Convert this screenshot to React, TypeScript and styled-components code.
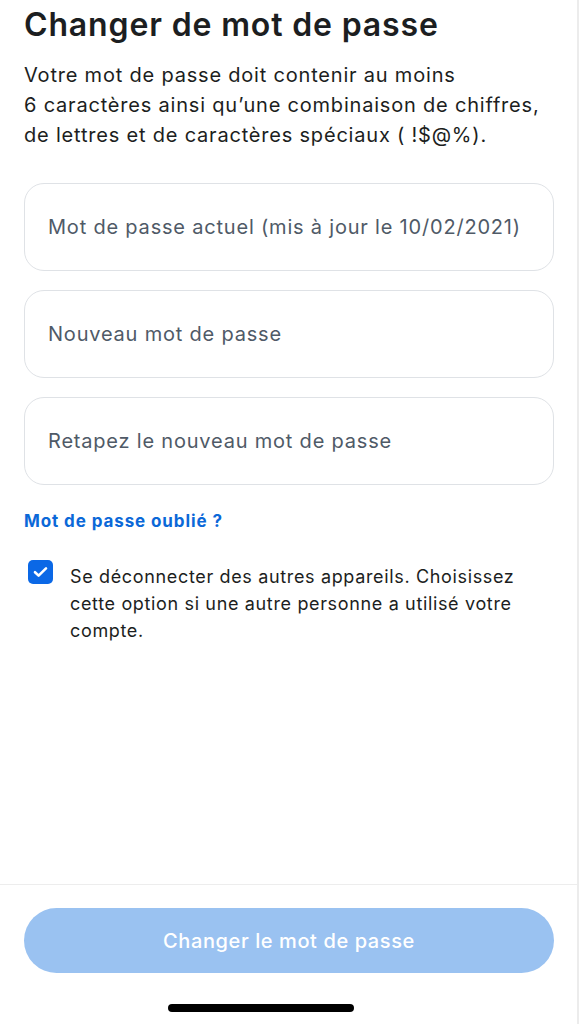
import styled, { createGlobalStyle } from 'styled-components';

const GlobalStyle = createGlobalStyle`
  html, body {
    margin: 0;
    padding: 0;
    background: #fff;
  }
  * {
    box-sizing: border-box;
  }
`;

const Screen = styled.div`
  /* full phone screen */
  display: flex;
  flex-direction: column;
  width: 579px;
  height: 1024px;
  font-family: Inter, 'Noto Sans', sans-serif;
  color: #1c1e21;
  border-right: 2px solid #ececec;
  overflow: hidden;
`;

const Content = styled.main`
  flex: 1;
  padding: 4px 23px 0 24px;
`;

const Title = styled.h1`
  margin: 0;
  font-size: 32px;
  line-height: 42px;
  font-weight: 600;
  letter-spacing: 0.85px;
`;

const Intro = styled.p`
  margin: 14px 0 0;
  font-size: 20px;
  line-height: 30px;
  font-weight: 400;
  letter-spacing: 0.8px;
`;

const Fields = styled.div`
  display: flex;
  flex-direction: column;
  gap: 19px;
  margin-top: 33px;
`;

const Field = styled.input`
  height: 88px;
  width: 100%;
  padding: 0 23px;
  border: 1.5px solid #dfe2e6;
  border-radius: 20px;
  font-family: inherit;
  font-size: 20px;
  letter-spacing: 0.8px;
  color: #1c1e21;
  background: #fff;
  outline: none;

  &::placeholder {
    color: #4f5a67;
  }
`;

const ForgotLink = styled.a`
  display: block;
  margin-top: 24px;
  font-size: 17px;
  line-height: 24px;
  font-weight: 650;
  letter-spacing: 0.9px;
  color: #0b68d8;
  text-decoration: none;
`;

const CheckRow = styled.label`
  display: flex;
  align-items: flex-start;
  gap: 17px;
  margin-top: 27px;
  padding-left: 4px;
`;

const CheckBox = styled.span`
  flex: none;
  display: flex;
  align-items: center;
  justify-content: center;
  width: 25px;
  height: 24px;
  border-radius: 5px;
  background: #0b68e6;
`;

const CheckText = styled.span`
  font-size: 18px;
  line-height: 27px;
  letter-spacing: 0.65px;
  padding-top: 3px;
`;

const Footer = styled.footer`
  display: flex;
  flex-direction: column;
  border-top: 1px solid #ededed;
  padding: 23px 23px 0 24px;
  height: 140px;
`;

const SubmitButton = styled.button`
  width: 100%;
  height: 65px;
  border: none;
  border-radius: 33px;
  background: #9ac2f1;
  color: #fff;
  font-family: inherit;
  font-size: 20px;
  font-weight: 500;
  letter-spacing: 0.6px;
`;

const HomeIndicator = styled.div`
  width: 186px;
  height: 8px;
  margin: 31px 0 0 144px;
  border-radius: 4px;
  background: #000;
`;

export default function App() {
  return (
    <>
      <GlobalStyle />
      <Screen>
        <Content>
          <Title>Changer de mot de passe</Title>
          <Intro>
            Votre mot de passe doit contenir au moins
            <br />
            6 caractères ainsi qu’une combinaison de chiffres,
            <br />
            de lettres et de caractères spéciaux ( !$@%).
          </Intro>
          <Fields>
            <Field type="password" placeholder="Mot de passe actuel (mis à jour le 10/02/2021)" />
            <Field type="password" placeholder="Nouveau mot de passe" />
            <Field type="password" placeholder="Retapez le nouveau mot de passe" />
          </Fields>
          <ForgotLink href="#">Mot de passe oublié ?</ForgotLink>
          <CheckRow>
            <CheckBox>
              <svg width="15" height="12" viewBox="0 0 15 12" fill="none">
                <path d="M2 6.2 5.6 9.6 13 2.4" stroke="#fff" strokeWidth="2.6" strokeLinecap="round" strokeLinejoin="round" />
              </svg>
            </CheckBox>
            <CheckText>
              Se déconnecter des autres appareils. Choisissez cette option si une autre personne a utilisé votre compte.
            </CheckText>
          </CheckRow>
        </Content>
        <Footer>
          <SubmitButton type="button">Changer le mot de passe</SubmitButton>
          <HomeIndicator />
        </Footer>
      </Screen>
    </>
  );
}
